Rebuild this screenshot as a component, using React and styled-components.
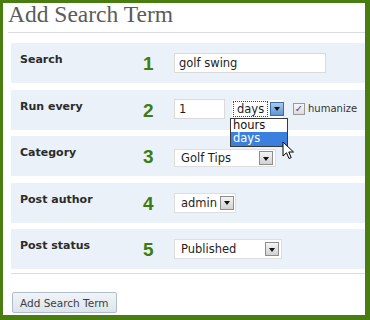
import React from "react";
import styled, { createGlobalStyle } from "styled-components";

const Global = createGlobalStyle`
  html, body { margin: 0; padding: 0; background: #fff; }
  body { font-family: "DejaVu Sans", Verdana, sans-serif; }
`;

const Frame = styled.div`
  box-sizing: border-box;
  width: 370px;
  height: 320px;
  border-style: solid;
  border-color: #4a7d10;
  border-width: 3px 5px 5px 3px;
  background: #fff;
  overflow: hidden;
`;

const Title = styled.h2`
  margin: 0;
  padding: 0 0 0 5px;
  font-family: "Liberation Serif", "Times New Roman", serif;
  font-weight: normal;
  font-size: 23.5px;
  line-height: 22px;
  color: #5b5b5b;
`;

const Rule = styled.div`
  margin: ${(p) => p.$top}px 0 0 ${(p) => p.$left}px;
  height: 1px;
  background: #dcdcdc;
`;

const Rows = styled.div`
  display: flex;
  flex-direction: column;
  gap: 6.5px;
  margin: 10px 0 0 8px;
`;

const Row = styled.div`
  display: grid;
  grid-template-columns: 120px 34px 1fr;
  align-items: start;
  height: 40px;
  padding-left: 9px;
  background: #eaf1f8;
`;

const Label = styled.div`
  padding-top: 10px;
  font-weight: bold;
  font-size: 11px;
  line-height: 13px;
  color: #2b2b2b;
`;

const Num = styled.div`
  padding: 11px 0 0 3px;
  font-family: "Liberation Sans", Arial, sans-serif;
  font-weight: bold;
  font-size: 19px;
  line-height: 20px;
  color: #3c7d0e;
`;

const Controls = styled.div`
  display: flex;
  align-items: center;
  padding-top: ${(p) => p.$top || 10}px;
`;

const TextInput = styled.div`
  box-sizing: border-box;
  width: ${(p) => p.$w}px;
  height: 20px;
  padding: 0 4px;
  background: #fff;
  border: 1px solid #dadada;
  font-size: 11.5px;
  line-height: 18px;
  color: #1e1e1e;
`;

const SelectWrap = styled.div`
  position: relative;
  margin-left: ${(p) => p.$ml || 0}px;
`;

const SelectBox = styled.div`
  box-sizing: border-box;
  display: flex;
  align-items: center;
  justify-content: space-between;
  width: ${(p) => p.$w}px;
  height: ${(p) => p.$h || 20}px;
  padding: 0 2px 0 ${(p) => (p.$focus ? 0 : 5)}px;
  background: #fff;
  border: 1px solid ${(p) => (p.$focus ? "transparent" : "#dedede")};
  font-size: 11.5px;
  color: #1e1e1e;
`;

const SelText = styled.span`
  flex: ${(p) => (p.$focus ? 1 : "none")};
  align-self: ${(p) => (p.$focus ? "stretch" : "auto")};
  display: flex;
  align-items: center;
  padding: 0 ${(p) => (p.$focus ? 3 : 0)}px;
  margin-right: 2px;
  border: 1px ${(p) => (p.$focus ? "dotted #444" : "solid transparent")};
`;

const Arrow = styled.div`
  box-sizing: border-box;
  flex: none;
  display: flex;
  align-items: center;
  justify-content: center;
  width: 14px;
  height: 14px;
  border: 1px solid ${(p) => (p.$active ? "#3b6ea5" : "#8d8d8d")};
  background: ${(p) =>
    p.$active
      ? "linear-gradient(#a9c9ec, #5f95d3)"
      : "linear-gradient(#f4f4f4, #d2d2d2)"};
  &::after {
    content: "";
    border-left: 3px solid transparent;
    border-right: 3px solid transparent;
    border-top: 4px solid #111;
    margin-top: 1px;
  }
`;

const Menu = styled.div`
  position: absolute;
  top: 100%;
  left: -2px;
  width: 58px;
  box-sizing: border-box;
  border: 1px solid #3a3a3a;
  background: #fff;
  z-index: 2;
`;

const MenuItem = styled.div`
  height: 13.5px;
  padding-left: 2px;
  font-size: 11.5px;
  line-height: 13.5px;
  color: ${(p) => (p.$on ? "#fff" : "#111")};
  background: ${(p) => (p.$on ? "#3b80dc" : "#fff")};
`;

const Pointer = styled.svg`
  position: absolute;
  left: 50px;
  top: 41px;
  z-index: 3;
`;

const Check = styled.div`
  box-sizing: border-box;
  display: flex;
  align-items: center;
  justify-content: center;
  width: 12px;
  height: 12px;
  margin-left: 10px;
  border: 1px solid #9a9a9a;
  background: linear-gradient(#f6f6f6, #dcdcdc);
  color: #2f4fa8;
  font-size: 10px;
  line-height: 10px;
`;

const CheckLabel = styled.span`
  margin-left: 3px;
  font-size: 10px;
  color: #333;
`;

const Button = styled.button`
  margin: 18px 0 0 9px;
  padding: 0 7px;
  height: 21px;
  border: 1px solid #aebccb;
  border-radius: 2px;
  background: linear-gradient(#f1f4f7, #dce4ec);
  font-family: "DejaVu Sans", Verdana, sans-serif;
  font-size: 10.5px;
  color: #404040;
`;

const rows = [
  { n: 1, label: "Search" },
  { n: 2, label: "Run every" },
  { n: 3, label: "Category" },
  { n: 4, label: "Post author" },
  { n: 5, label: "Post status" },
];

function Select({ w, value, h }) {
  return (
    <SelectBox $w={w} $h={h}>
      <SelText>{value}</SelText>
      <Arrow />
    </SelectBox>
  );
}

function controlsFor(n) {
  if (n === 1)
    return (
      <Controls>
        <TextInput $w={152}>golf swing</TextInput>
      </Controls>
    );
  if (n === 2)
    return (
      <Controls $top={9}>
        <TextInput $w={51}>1</TextInput>
        <SelectWrap $ml={7}>
          <SelectBox $w={51} $h={18} $focus>
            <SelText $focus>days</SelText>
            <Arrow $active />
          </SelectBox>
          <Menu>
            <MenuItem>hours</MenuItem>
            <MenuItem $on>days</MenuItem>
          </Menu>
          <Pointer width="13" height="20" viewBox="0 0 13 20">
            <path
              d="M1 1 L1 15 L4.5 11.8 L7 17.5 L9.2 16.6 L6.8 11 L11.5 11 Z"
              fill="#fff"
              stroke="#000"
              strokeWidth="1"
              strokeLinejoin="round"
            />
          </Pointer>
        </SelectWrap>
        <Check>✓</Check>
        <CheckLabel>humanize</CheckLabel>
      </Controls>
    );
  if (n === 3)
    return (
      <Controls $top={13}>
        <Select w={102} h={18} value="Golf Tips" />
      </Controls>
    );
  if (n === 4)
    return (
      <Controls>
        <Select w={62} value="admin" />
      </Controls>
    );
  return (
    <Controls>
      <Select w={108} value="Published" />
    </Controls>
  );
}

export default function App() {
  return (
    <>
      <Global />
      <Frame>
        <Title>Add Search Term</Title>
        <Rule $top={7} $left={5} />
        <Rows>
          {rows.map((r) => (
            <Row key={r.n}>
              <Label>{r.label}</Label>
              <Num>{r.n}</Num>
              {controlsFor(r.n)}
            </Row>
          ))}
        </Rows>
        <Rule $top={4} $left={8} />
        <Button>Add Search Term</Button>
      </Frame>
    </>
  );
}
